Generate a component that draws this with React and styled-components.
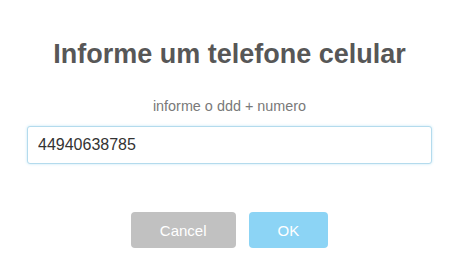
import React from "react";
import styled, { createGlobalStyle } from "styled-components";

const Global = createGlobalStyle`
  html, body { margin: 0; padding: 0; background: #fff; }
  body { font-family: "Liberation Sans", Arial, sans-serif; }
`;

const Modal = styled.div`
  box-sizing: border-box;
  width: 456px;
  height: 261px;
  padding: 38px 24px 0 27px;
  display: flex;
  flex-direction: column;
  align-items: stretch;
  background: #fff;
`;

const Title = styled.h2`
  margin: 0;
  font-size: 27px;
  line-height: 33px;
  font-weight: 700;
  color: #575757;
  text-align: center;
`;

const Subtitle = styled.p`
  margin: 26px 0 0;
  font-size: 14.4px;
  line-height: 18px;
  color: #797979;
  text-align: center;
`;

const Input = styled.input`
  box-sizing: border-box;
  margin-top: 11px;
  width: 100%;
  height: 38px;
  padding: 0 10px;
  border: 1px solid #b4dbed;
  border-radius: 3px;
  font-family: "Liberation Sans", Arial, sans-serif;
  font-size: 16px;
  color: #333;
  outline: none;
  box-shadow: 0 0 3px #c4e6f5;
`;

const Actions = styled.div`
  margin-top: 48px;
  display: flex;
  justify-content: center;
  gap: 13px;
`;

const Button = styled.button`
  height: 36px;
  padding: 0 ${(p) => p.$px}px;
  border: none;
  border-radius: 4px;
  background: ${(p) => p.$bg};
  color: #fff;
  font-family: "Liberation Sans", Arial, sans-serif;
  font-size: 15px;
  cursor: pointer;
`;

export default function App() {
  return (
    <>
      <Global />
      <Modal>
        <Title>Informe um telefone celular</Title>
        <Subtitle>informe o ddd + numero</Subtitle>
        <Input defaultValue="44940638785" />
        <Actions>
          <Button $bg="#c1c1c1" $px={29}>Cancel</Button>
          <Button $bg="#8cd4f5" $px={29}>OK</Button>
        </Actions>
      </Modal>
    </>
  );
}
